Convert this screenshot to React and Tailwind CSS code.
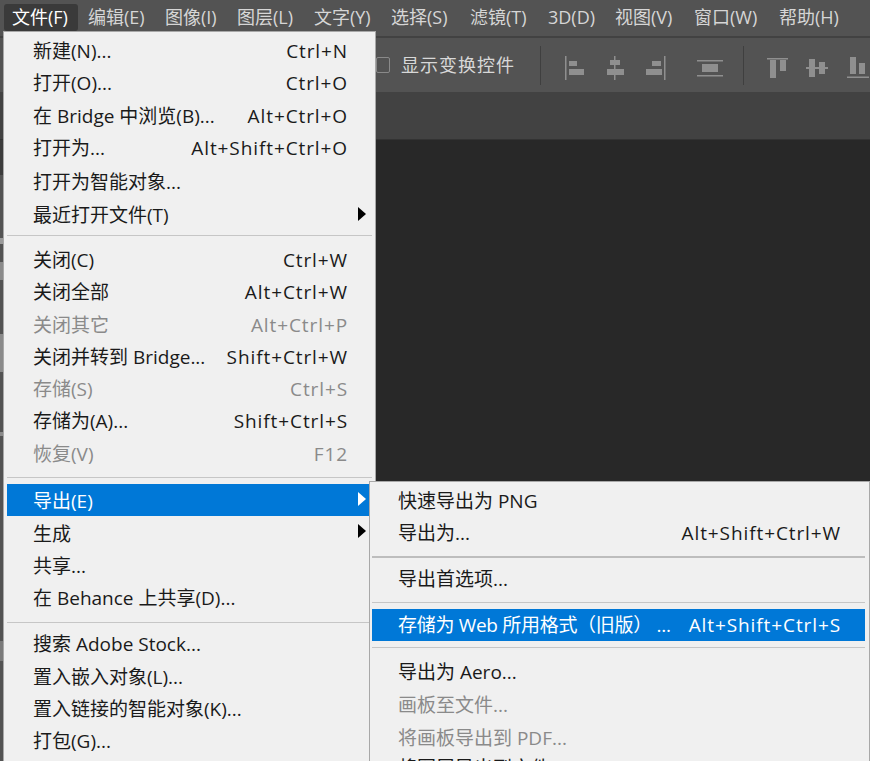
const font = { fontFamily: '"Open Sans", "Noto Sans CJK SC", sans-serif' };

const menuBar = [
  ["文件(F)", 12],
  ["编辑(E)", 88],
  ["图像(I)", 165],
  ["图层(L)", 237],
  ["文字(Y)", 314],
  ["选择(S)", 391],
  ["滤镜(T)", 470],
  ["3D(D)", 548],
  ["视图(V)", 615],
  ["窗口(W)", 694],
  ["帮助(H)", 779],
];

const fileMenu = [
  { label: "新建(N)...", key: "Ctrl+N", h: "h-[32px]" },
  { label: "打开(O)...", key: "Ctrl+O", h: "h-[33px]" },
  { label: "在 Bridge 中浏览(B)...", key: "Alt+Ctrl+O", h: "h-[32px]" },
  { label: "打开为...", key: "Alt+Shift+Ctrl+O", h: "h-[33px]" },
  { label: "打开为智能对象...", h: "h-[34px] pt-[1px]" },
  { label: "最近打开文件(T)", arrow: true, h: "h-[33px]" },
  { sep: true, h: "h-[12px] items-start pt-[3px]" },
  { label: "关闭(C)", key: "Ctrl+W", h: "h-[32px]" },
  { label: "关闭全部", key: "Alt+Ctrl+W", h: "h-[33px]" },
  { label: "关闭其它", key: "Alt+Ctrl+P", disabled: true, h: "h-[32px]" },
  { label: "关闭并转到 Bridge...", key: "Shift+Ctrl+W", h: "h-[32px]" },
  { label: "存储(S)", key: "Ctrl+S", disabled: true, h: "h-[32px]" },
  { label: "存储为(A)...", key: "Shift+Ctrl+S", h: "h-[33px]" },
  { label: "恢复(V)", key: "F12", disabled: true, h: "h-[32px]" },
  { sep: true, h: "h-[14px] items-center" },
  { label: "导出(E)", arrow: true, active: true, h: "h-[32px] pt-[2px]" },
  { label: "生成", arrow: true, h: "h-[33px] pt-[4px]" },
  { label: "共享...", h: "h-[32px] pt-[2px]" },
  { label: "在 Behance 上共享(D)...", h: "h-[32px] pt-[2px]" },
  { sep: true, h: "h-[14px] items-end pb-[4px]" },
  { label: "搜索 Adobe Stock...", h: "h-[32px] pt-[2px]" },
  { label: "置入嵌入对象(L)...", h: "h-[33px] pt-[4px]" },
  { label: "置入链接的智能对象(K)...", h: "h-[32px] pt-[2px]" },
  { label: "打包(G)...", h: "h-[33px] pt-[2px]" },
];

const exportMenu = [
  { label: "快速导出为 PNG", h: "h-[32px]" },
  { label: "导出为...", key: "Alt+Shift+Ctrl+W", h: "h-[33px]" },
  { sep: true, h: "h-[13px] items-center", thick: true },
  { label: "导出首选项...", h: "h-[32px]" },
  { sep: true, h: "h-[14px] items-center" },
  { label: "存储为 Web 所用格式（旧版） ...", labelClass: "tracking-[-0.3px]", key: "Alt+Shift+Ctrl+S", active: true, h: "h-[32px]" },
  { sep: true, h: "h-[15px] items-start pt-[6px]" },
  { label: "导出为 Aero...", h: "h-[33px]" },
  { label: "画板至文件...", disabled: true, h: "h-[33px]" },
  { label: "将画板导出到 PDF...", disabled: true, h: "h-[33px]" },
  { label: "将图层导出到文件...", h: "h-[32px] -mt-[3px]" },
];

function Row({ item }) {
  if (item.sep) {
    return (
      <div className={`flex justify-center ${item.h}`}>
        <div className={`w-full ${item.thick ? "h-[2px] bg-[#bdbdbd]" : "h-[1px] bg-[#c6c6c6]"}`} />
      </div>
    );
  }
  const color = item.active ? "text-white bg-[#0078d7]" : item.disabled ? "text-[#8a8a8a]" : "text-[#1a1a1a]";
  return (
    <div className={`relative flex items-center justify-between pl-[26px] pr-[24px] text-[19px] leading-none whitespace-nowrap ${item.h} ${color}`}>
      <span className={item.labelClass}>{item.label}</span>
      {item.key && <span className="tracking-[0.9px]">{item.key}</span>}
      {item.arrow && (
        <svg className="absolute right-[6px] top-[8px]" width="8" height="14" viewBox="0 0 8 14">
          <path d="M0 0 L8 7 L0 14 Z" fill={item.active ? "#ffffff" : "#000000"} />
        </svg>
      )}
    </div>
  );
}

function AlignIcon({ type }) {
  return (
    <svg width="24" height="26" viewBox="0 0 24 26" fill="#8f8f8f" className="mt-[6px] overflow-visible">
      {type === "left" && (
        <g>
          <rect x="2" y="1" width="1.5" height="24" />
          <rect x="6" y="6" width="8" height="5" />
          <rect x="6" y="14" width="15" height="6" />
        </g>
      )}
      {type === "center" && (
        <g>
          <rect x="11" y="1" width="1.5" height="24" />
          <rect x="7" y="5" width="10" height="5" />
          <rect x="4" y="14" width="17" height="6" />
        </g>
      )}
      {type === "right" && (
        <g>
          <rect x="21" y="1" width="1.5" height="24" />
          <rect x="9" y="6" width="9" height="5" />
          <rect x="3" y="14" width="16" height="6" />
        </g>
      )}
      {type === "dist" && (
        <g>
          <rect x="0" y="5" width="26" height="1.5" />
          <rect x="5" y="9" width="16" height="8" />
          <rect x="0" y="20" width="26" height="1.5" />
        </g>
      )}
      {type === "top" && (
        <g>
          <rect x="1" y="3" width="21" height="1.5" />
          <rect x="4" y="5" width="6" height="18" />
          <rect x="14" y="5" width="6" height="11" />
        </g>
      )}
      {type === "middle" && (
        <g>
          <rect x="0" y="12" width="22" height="2" />
          <rect x="3" y="4" width="6" height="18" />
          <rect x="13" y="7" width="6" height="12" />
        </g>
      )}
      {type === "bottom" && (
        <g>
          <rect x="1" y="21.5" width="22" height="1.5" />
          <rect x="4" y="2" width="6" height="17" />
          <rect x="13" y="8" width="6" height="11" />
        </g>
      )}
    </svg>
  );
}

export default function App() {
  return (
    <div className="relative w-[870px] h-[761px] overflow-hidden bg-[#282828] flex flex-col" style={font}>
      <div className="relative h-[38px] bg-[#535353] border-b-2 border-[#424242] text-[#d6d6d6] text-[18px]">
        <div className="absolute left-[4px] top-[4px] w-[74px] h-[27px] bg-[#3a3a3a] rounded-[3px]" />
        {menuBar.map(([label, x], i) => (
          <span
            key={label}
            className={`absolute top-[4px] h-[27px] flex items-center whitespace-nowrap ${i === 0 ? "text-white" : ""}`}
            style={{ left: x }}
          >
            {label}
          </span>
        ))}
      </div>
      <div className="h-[56px] bg-[#535353] border-b-2 border-[#424242] flex items-center">
        <div className="w-[376px]" />
        <div className="w-[14px] h-[16px] border border-[#8a8a8a] rounded-[2px] ml-[1px]" />
        <span className="ml-[11px] text-[18px] text-[#d8d8d8] tracking-[1px] whitespace-nowrap">显示变换控件</span>
        <div className="ml-[25px] w-[1px] h-[39px] bg-[#3f3f3f]" />
        <div className="ml-[22px] flex items-center gap-[16px]">
          <AlignIcon type="left" />
          <AlignIcon type="center" />
          <AlignIcon type="right" />
        </div>
        <div className="ml-[30px]"><AlignIcon type="dist" /></div>
        <div className="ml-[22px] w-[1px] h-[39px] bg-[#3f3f3f]" />
        <div className="ml-[22px] flex items-center gap-[16px]">
          <AlignIcon type="top" />
          <AlignIcon type="middle" />
          <AlignIcon type="bottom" />
        </div>
      </div>
      <div className="h-[46px] bg-[#424242] border-b border-[#333333]" />
      <div className="flex-1 flex">
        {/* tool strip peeking out left of the menu */}
        <div className="w-[3px] bg-[#535353] flex flex-col">
          <div className="h-[35px] bg-[#3c3c3c]" />
          <div className="mt-[63px] h-[6px] bg-[#9a9a9a]" />
          <div className="mt-[18px] h-[18px] bg-[#8a8a8a]" />
          <div className="mt-[54px] h-[38px] bg-[#8a8a8a]" />
          <div className="mt-[60px] h-[4px] bg-[#8a8a8a]" />
          <div className="mt-[205px] h-[20px] bg-[#7a7a7a]" />
        </div>
        <div className="flex-1 bg-[#282828]" />
      </div>

      <div className="absolute left-[3px] top-[31px] w-[373px] h-[740px] bg-[#f0f0f0] border border-[#a8a8a8] px-[3px] pt-[3px]">
        {fileMenu.map((item, i) => (
          <Row key={i} item={item} />
        ))}
      </div>

      <div className="absolute left-[369px] top-[481px] w-[501px] h-[290px] bg-[#f0f0f0] border border-[#a8a8a8] pl-[2px] pr-[4px] pt-[3px]">
        {exportMenu.map((item, i) => (
          <Row key={i} item={item} />
        ))}
      </div>
    </div>
  );
}
